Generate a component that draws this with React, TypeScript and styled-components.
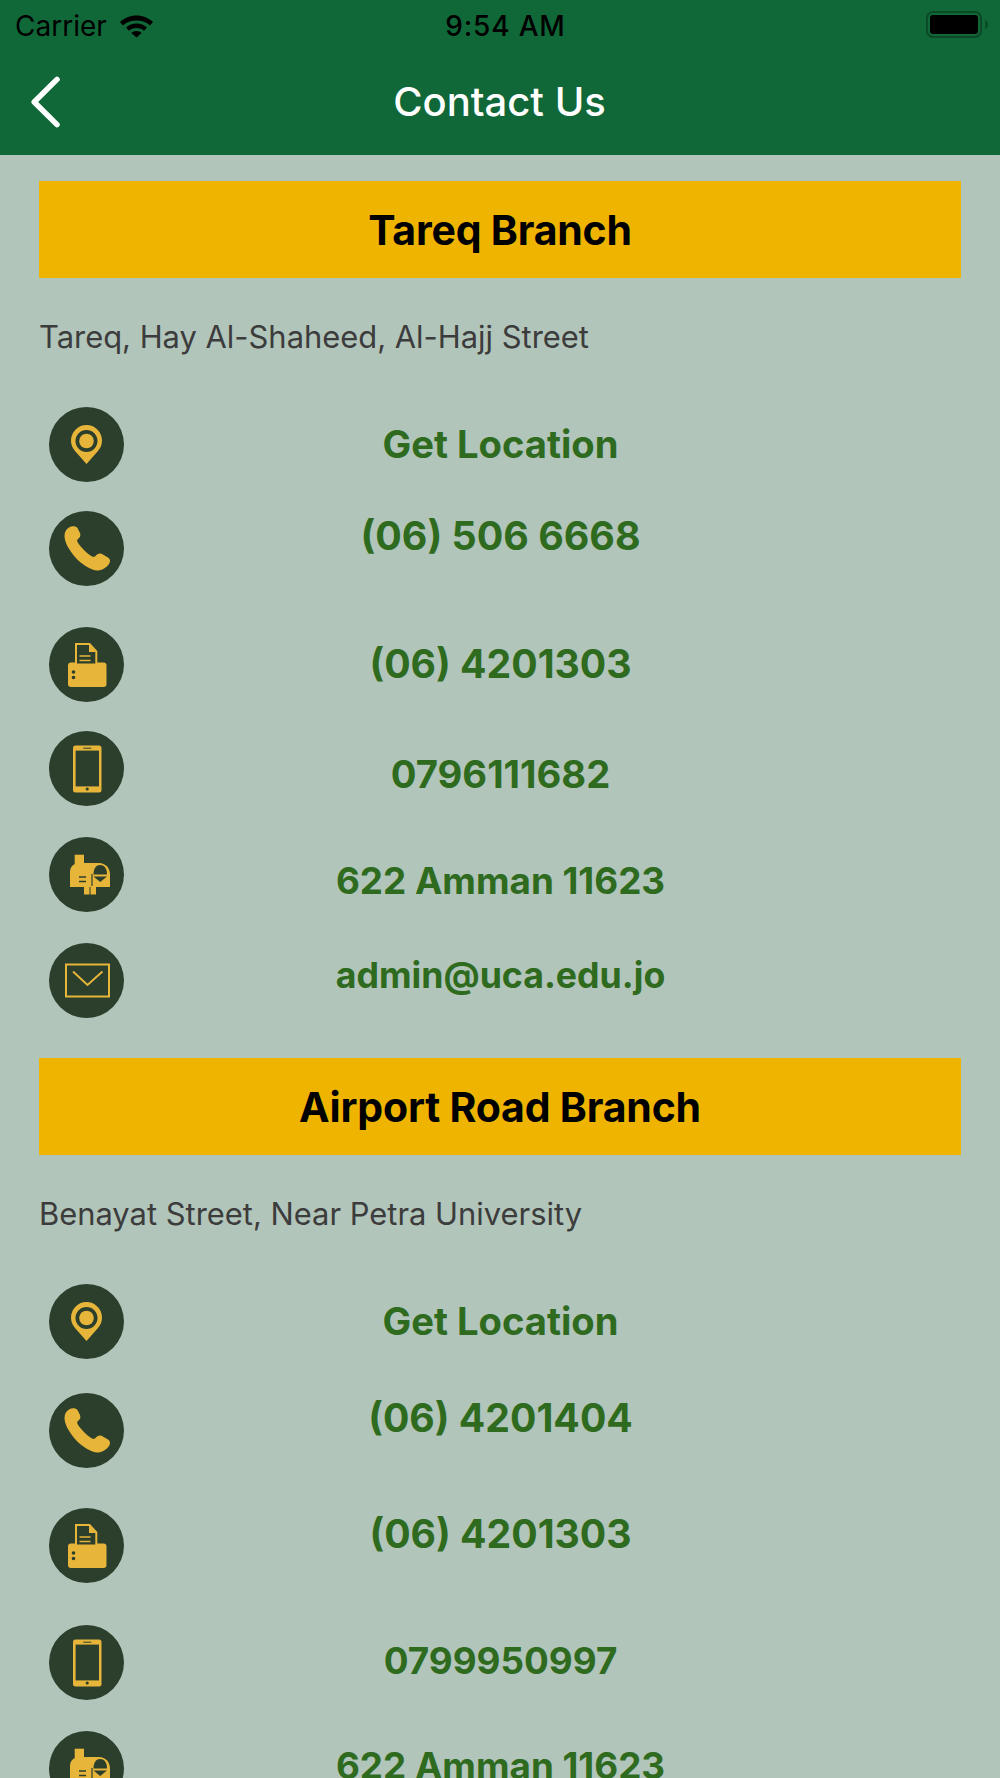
import React from 'react'
import styled, { createGlobalStyle } from 'styled-components'

const GlobalStyle = createGlobalStyle`
  html, body {
    margin: 0;
    padding: 0;
    background: #b2c5ba;
    font-family: Inter, "Liberation Sans", sans-serif;
  }
  #root {
    height: 1778px;
    overflow: hidden;
  }
`

const GOLD = '#e6b53a'
const DARK = '#2b3f2c'

const Header = styled.header`
  height: 155px;
  background: #106838;
  display: flex;
  flex-direction: column;
`

const StatusBar = styled.div`
  height: 52px;
  padding: 0 12px 0 15px;
  display: grid;
  grid-template-columns: 1fr auto 1fr;
  align-items: center;
  font-size: 28px;
  color: #000;
`

const StatusLeft = styled.div`
  display: flex;
  align-items: center;
  gap: 13px;
`

const StatusTime = styled.span`
  margin-left: 8px;
  font-weight: 500;
  letter-spacing: 0.8px;
`

const StatusRight = styled.div`
  display: flex;
  justify-content: flex-end;
`

const NavBar = styled.div`
  flex: 1;
  padding: 0 32px 4px 31px;
  display: grid;
  grid-template-columns: 60px 1fr 60px;
  align-items: center;
`

const Title = styled.h1`
  margin: 0;
  text-align: center;
  font-size: 40px;
  font-weight: 500;
  color: #fff;
`

const Content = styled.main`
  padding: 26px 39px 0;
`

const BranchBar = styled.h2`
  margin: 0;
  height: 97px;
  background: #efb400;
  display: flex;
  align-items: center;
  justify-content: center;
  font-size: 41px;
  font-weight: 700;
  letter-spacing: -0.2px;
  color: #000;
`

const Address = styled.p`
  margin: 0;
  padding-top: 39px;
  height: 88px;
  font-size: 30.9px;
  line-height: 40px;
  color: #3c3c3c;
  box-sizing: border-box;
`

const Rows = styled.div<{ $after: number }>`
  margin-bottom: ${p => p.$after}px;
`

const Row = styled.div<{ $height: number }>`
  height: ${p => p.$height}px;
  padding: 0 8px 0 9px;
  display: grid;
  grid-template-columns: 75.5px 1fr 75.5px;
  align-items: start;
`

const IconCircle = styled.div<{ $top: number }>`
  width: 75px;
  height: 75px;
  margin: ${p => p.$top}px 0 0 0.5px;
  border-radius: 50%;
  background: ${DARK};
`

const Label = styled.a<{ $top: number; $size: number }>`
  margin-top: ${p => p.$top}px;
  height: 50px;
  line-height: 50px;
  text-align: center;
  font-size: ${p => p.$size}px;
  font-weight: 650;
  white-space: nowrap;
  color: #2f6b1f;
`

const PinIcon = () => (
  <svg width="75" height="75" viewBox="0 0 75 75">
    <path d="M37.5 57 L26 44 A15.5 15.5 0 1 1 49 44 Z" fill={GOLD} />
    <circle cx="37.5" cy="34" r="11" fill={DARK} />
    <circle cx="37.5" cy="34" r="7.3" fill={GOLD} />
  </svg>
)

const PhoneIcon = () => (
  <svg width="75" height="75" viewBox="0 0 75 75">
    <path
      d="M20 16.5 C23 14.5 27 15 28.5 17 L31 22 C32 24.5 31 26.5 29 28 C28 29 28 30 28.5 31 C31.5 36 38 42.5 43 45.5 C44.5 46 45.5 46 46.5 45 C48 43 50.5 42 53 43 L59 46.5 C61.5 48 61.5 51 60 53 C57 57 53 59.5 48 59.5 C43 59.5 33 54 26 46 C20 39 15.5 31 15.5 25 C15.5 21 17 18.5 20 16.5 Z"
      fill={GOLD}
    />
  </svg>
)

const FaxIcon = () => (
  <svg width="75" height="75" viewBox="0 0 75 75">
    <rect x="19" y="35.5" width="38.5" height="24.5" rx="3" fill={GOLD} />
    <path d="M27 17 H40.5 L47.3 24.5 V37.5 H27 Z" fill={DARK} stroke={GOLD} strokeWidth="2" />
    <path d="M40 17 V25 H47" fill={GOLD} />
    <path d="M30.5 29 H41.5 M30.5 33.5 H41.5" stroke={GOLD} strokeWidth="1.6" />
    <circle cx="24.5" cy="45" r="1.8" fill={DARK} />
    <circle cx="24.5" cy="50.5" r="1.8" fill={DARK} />
  </svg>
)

const MobileIcon = () => (
  <svg width="75" height="75" viewBox="0 0 75 75">
    <rect x="24" y="14.5" width="28.5" height="47" rx="2.5" fill={GOLD} />
    <rect x="26.6" y="19.6" width="23.4" height="35.8" fill={DARK} />
    <path d="M34.3 17.2 H42.3" stroke={DARK} strokeWidth="1" />
    <circle cx="38.2" cy="58" r="1.6" fill={DARK} />
  </svg>
)

const MailboxIcon = () => (
  <svg width="75" height="75" viewBox="0 0 75 75">
    <rect x="25.7" y="17.7" width="9.3" height="9.5" fill={GOLD} />
    <path d="M21 50 V35 C21 29.5 25 26 30 26 H50 C56.5 26 61 31 61 37.5 V50 Z" fill={GOLD} />
    <path d="M44.5 37.5 C44.5 31 47.5 28 51 28 C55 28 58 31 58 37.5 Z" fill={DARK} />
    <path d="M44.5 39.5 H58 L51.2 45 Z" fill={DARK} />
    <path d="M43 37 V49" stroke={DARK} strokeWidth="1.2" />
    <path d="M30 40 H37 M30 44.5 H37" stroke={DARK} strokeWidth="1.5" />
    <rect x="35" y="50" width="5.5" height="7.5" fill={GOLD} />
    <rect x="41.5" y="50" width="5.5" height="7.5" fill={GOLD} />
  </svg>
)

const MailIcon = () => (
  <svg width="75" height="75" viewBox="0 0 75 75">
    <rect x="17" y="21.5" width="43" height="32" fill="none" stroke={GOLD} strokeWidth="2" />
    <path d="M24 28.5 L38.5 42 L53.5 28.5" fill="none" stroke={GOLD} strokeWidth="2" />
  </svg>
)

const WifiIcon = () => (
  <svg width="33" height="23" viewBox="0 0 33 22">
    <path d="M16.5 0 C10 0 4.5 2.5 0 6.5 L3 10 C6.5 6.8 11 5 16.5 5 C22 5 26.5 6.8 30 10 L33 6.5 C28.5 2.5 23 0 16.5 0 Z" fill="#000" />
    <path d="M16.5 8 C12.5 8 9 9.5 6 12 L9 15.3 C11 13.6 13.5 12.6 16.5 12.6 C19.5 12.6 22 13.6 24 15.3 L27 12 C24 9.5 20.5 8 16.5 8 Z" fill="#000" />
    <path d="M16.5 15.5 C14.5 15.5 12.8 16.2 11.4 17.4 L16.5 22 L21.6 17.4 C20.2 16.2 18.5 15.5 16.5 15.5 Z" fill="#000" />
  </svg>
)

const BatteryIcon = () => (
  <svg width="62" height="30" viewBox="0 0 62 30">
    <rect x="1" y="1" width="54" height="25" rx="6" fill="none" stroke="#0a4a27" strokeWidth="2" />
    <rect x="4" y="4" width="48" height="19" rx="3" fill="#000" />
    <path d="M59 8.5 C61 10 62 11.5 62 13.5 C62 15.5 61 17 59 18.5 Z" fill="#0a4a27" />
  </svg>
)

const BackIcon = () => (
  <svg width="30" height="52" viewBox="0 0 30 52">
    <path d="M26 3.4 L3.2 26 L26 48.6" fill="none" stroke="#fff" strokeWidth="5.5" strokeLinecap="round" strokeLinejoin="round" />
  </svg>
)

type Item = {
  icon: React.ReactNode
  text: string
  size: number
  height: number
  iconTop: number
  textTop: number
}

type Branch = {
  name: string
  address: string
  after: number
  items: Item[]
}

const branches: Branch[] = [
  {
    name: 'Tareq Branch',
    address: 'Tareq, Hay Al-Shaheed, Al-Hajj Street',
    after: 40,
    items: [
      { icon: <PinIcon />, text: 'Get Location', size: 38.2, height: 145, iconTop: 41, textTop: 53 },
      { icon: <PhoneIcon />, text: '(06) 506 6668', size: 39.4, height: 116, iconTop: 0, textTop: 0 },
      { icon: <FaxIcon />, text: '(06) 4201303', size: 39.2, height: 104, iconTop: 0, textTop: 12 },
      { icon: <MobileIcon />, text: '0796111682', size: 38.2, height: 106, iconTop: 0, textTop: 18 },
      { icon: <MailboxIcon />, text: '622 Amman 11623', size: 36.8, height: 106, iconTop: 0, textTop: 19 },
      { icon: <MailIcon />, text: 'admin@uca.edu.jo', size: 35.7, height: 75, iconTop: 0, textTop: 7 },
    ],
  },
  {
    name: 'Airport Road Branch',
    address: 'Benayat Street, Near Petra University',
    after: 0,
    items: [
      { icon: <PinIcon />, text: 'Get Location', size: 38.2, height: 150, iconTop: 41, textTop: 53 },
      { icon: <PhoneIcon />, text: '(06) 4201404', size: 39.2, height: 115, iconTop: 0, textTop: 0 },
      { icon: <FaxIcon />, text: '(06) 4201303', size: 39.2, height: 117, iconTop: 0, textTop: 1 },
      { icon: <MobileIcon />, text: '0799950997', size: 36.8, height: 106, iconTop: 0, textTop: 11 },
      { icon: <MailboxIcon />, text: '622 Amman 11623', size: 36.8, height: 75, iconTop: 0, textTop: 10 },
    ],
  },
]

export default function App() {
  return (
    <>
      <GlobalStyle />
      <Header>
        <StatusBar>
          <StatusLeft>
            <span>Carrier</span>
            <WifiIcon />
          </StatusLeft>
          <StatusTime>9:54 AM</StatusTime>
          <StatusRight>
            <BatteryIcon />
          </StatusRight>
        </StatusBar>
        <NavBar>
          <BackIcon />
          <Title>Contact Us</Title>
        </NavBar>
      </Header>
      <Content>
        {branches.map(branch => (
          <section key={branch.name}>
            <BranchBar>{branch.name}</BranchBar>
            <Address>{branch.address}</Address>
            <Rows $after={branch.after}>
              {branch.items.map((item, index) => (
                <Row key={index} $height={item.height}>
                  <IconCircle $top={item.iconTop}>{item.icon}</IconCircle>
                  <Label $top={item.textTop} $size={item.size}>{item.text}</Label>
                </Row>
              ))}
            </Rows>
          </section>
        ))}
      </Content>
    </>
  )
}
